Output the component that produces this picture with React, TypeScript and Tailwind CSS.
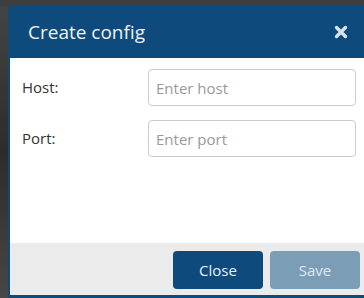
import React from "react";

/* ─── close "✖" glyph ─── */
function CloseIcon() {
  return (
    <svg width="14" height="14" viewBox="0 0 14 14" aria-hidden>
      <path
        d="M2.5 2.5 L11.5 11.5 M11.5 2.5 L2.5 11.5"
        stroke="#d9e3ec"
        strokeWidth="3.4"
        strokeLinecap="round"
      />
    </svg>
  );
}

function Field({ label, placeholder }: { label: string; placeholder: string }) {
  return (
    <div className="flex items-center">
      <label className="w-[126px] text-[15px] text-[#333333]">{label}</label>
      <input
        placeholder={placeholder}
        className="w-[208px] h-[37px] rounded-[4px] border border-[#cccccc] bg-white px-[7px] text-[15px] text-[#333] placeholder:text-[#999999] outline-none"
      />
    </div>
  );
}

export default function App() {
  return (
    <div
      className="w-[364px] h-[298px] overflow-hidden flex bg-[#3e3e3e] pt-[6px]"
      style={{ fontFamily: '"Open Sans", "Liberation Sans", sans-serif' }}
    >
      {/* backdrop strip on the left */}
      <div className="w-[8px] shrink-0 bg-gradient-to-b from-[#444444] via-[#2c2c2c] to-[#474747]" />

      {/* ── modal ── */}
      <div className="w-[360px] shrink-0 flex flex-col">
        <div className="h-[52px] bg-[#0e4a7c] flex items-center justify-between pl-[20px] pr-[20px]">
          <h2 className="text-[19px] text-[#eef3f7] leading-none">Create config</h2>
          <CloseIcon />
        </div>

        <div className="flex-1 bg-white border-l-2 border-[#0e4a7c] pl-[12px] pt-[11px] flex flex-col gap-[14px]">
          <Field label="Host:" placeholder="Enter host" />
          <Field label="Port:" placeholder="Enter port" />
        </div>

        <div className="h-[55px] bg-[#ebebeb] border-l-2 border-b-[3px] border-[#0e4a7c] flex justify-end items-start pt-[8px] pr-[8px] gap-[7px]">
          <button className="w-[90px] h-[38px] rounded-[4px] bg-[#0e4a7c] text-[15px] text-[#eaf0f5]">
            Close
          </button>
          <button className="w-[90px] h-[38px] rounded-[4px] bg-[#7b9db6] text-[15px] text-[#dfe8ef]">
            Save
          </button>
        </div>
      </div>
    </div>
  );
}
